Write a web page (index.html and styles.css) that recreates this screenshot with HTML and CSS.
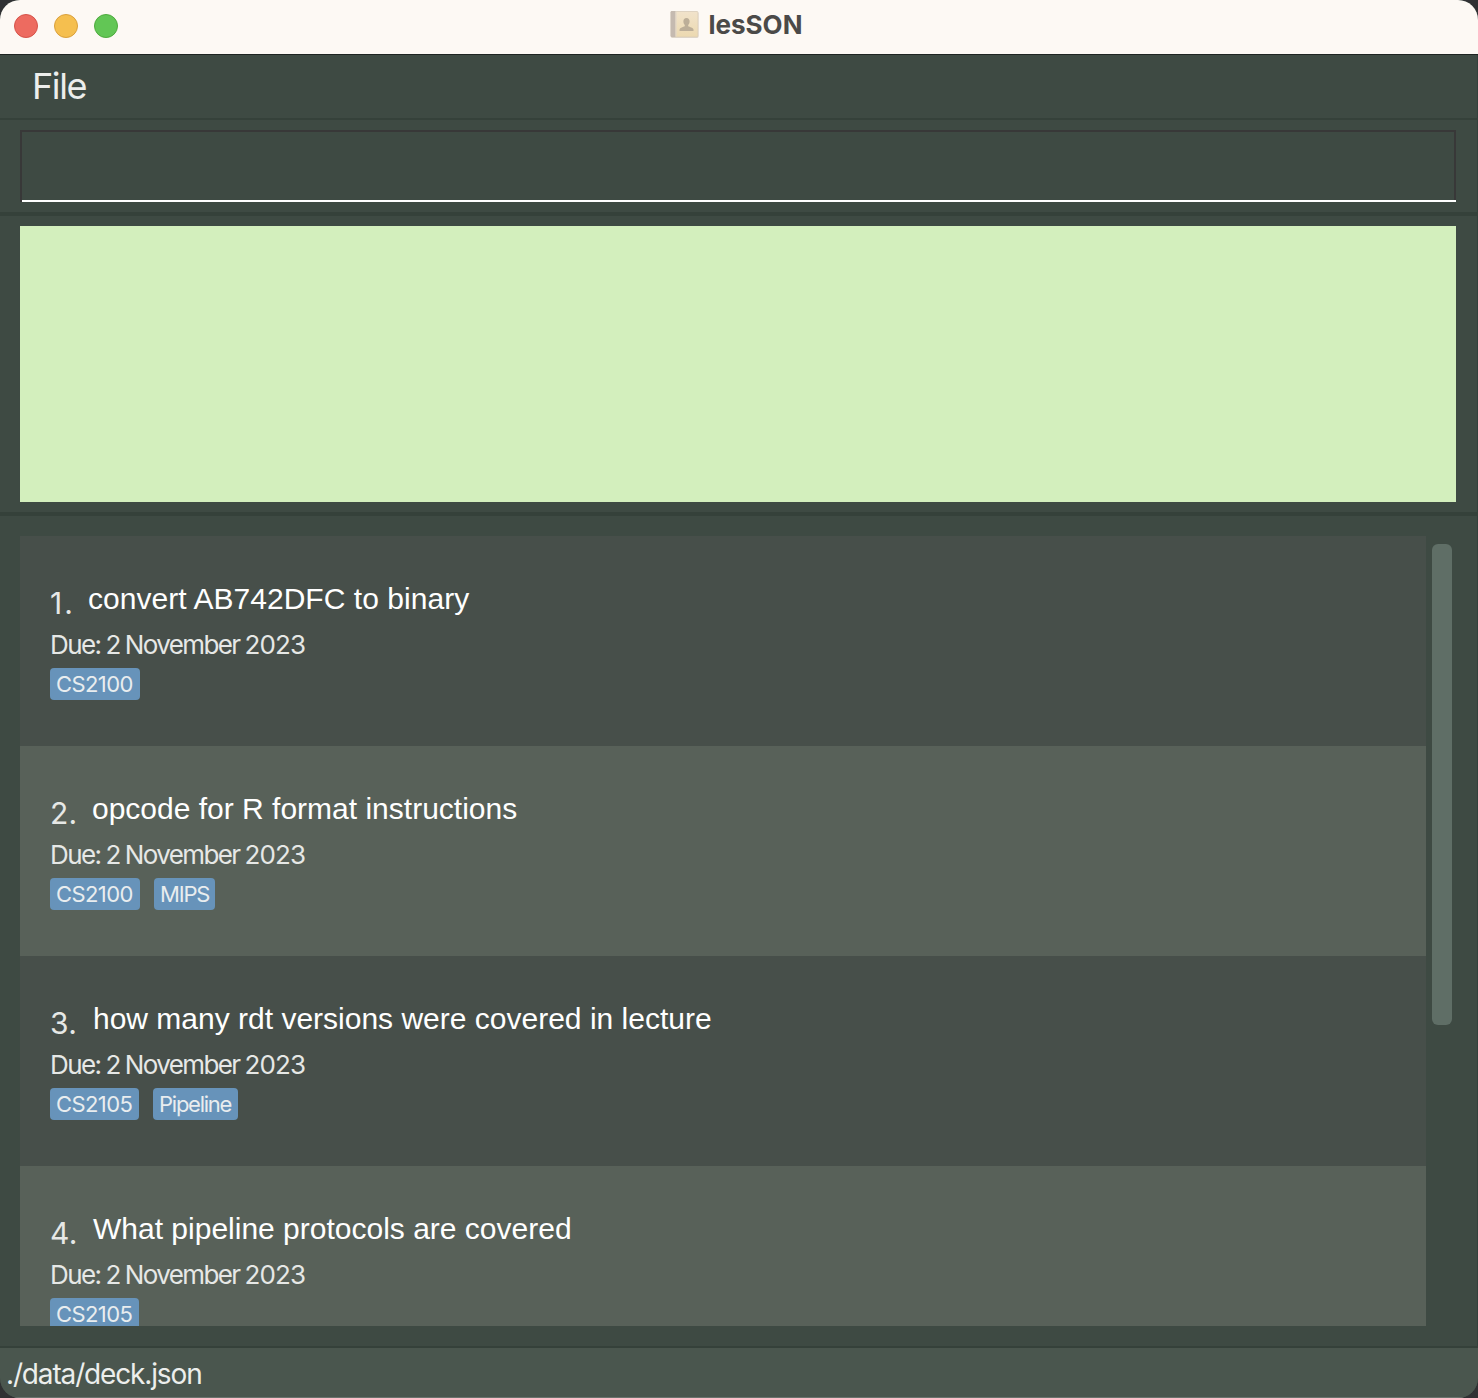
FILE: index.html
```html
<!DOCTYPE html>
<html lang="en">
<head>
<meta charset="utf-8">
<title>lesSON</title>
<link rel="stylesheet" href="styles.css">
</head>
<body>
<div class="window">
  <header class="titlebar">
    <div class="lights"><span class="light red"></span><span class="light yellow"></span><span class="light green"></span></div>
    <div class="title">
      <svg class="book" width="30" height="30" viewBox="0 0 30 30">
        <defs><linearGradient id="cover" x1="0" y1="0" x2="0" y2="1"><stop offset="0" stop-color="#f1e3cb"/><stop offset="1" stop-color="#ecd9b0"/></linearGradient></defs>
        <rect x="1" y="2" width="27.5" height="26" rx="1.5" fill="#e3dcd2"/>
        <rect x="1" y="1.500" width="27" height="25.5" rx="1" fill="url(#cover)" stroke="#d8ccb9" stroke-width=".8"/>
        <path d="M.6 2.200Q.6 1.100 1.800 1.100H5.500V27H1.800Q.6 27 .6 25.800Z" fill="#c5bab0"/>
        <rect x="5.500" y="1.500" width="1" height="25" fill="#e0d6c9"/>
        <path d="M16.500 8c2 0 3.100 1.300 3.100 3.300 0 1.700-.6 2.900-1.400 3.700v1.300c1.600.9 4.800 1.300 5.300 3.100v1.600H9.500v-1.600c.5-1.800 3.700-2.200 5.300-3.100V15c-.8-.8-1.400-2-1.400-3.700C13.400 9.300 14.500 8 16.500 8Z" fill="#bcae98"/>
      </svg>
      <span class="title-text">lesSON</span>
    </div>
  </header>
  <nav class="menubar"><span class="menu">File</span></nav>
  <section class="command"><div class="command-box"></div></section>
  <section class="result"><div class="result-box"></div></section>
  <main class="deck">
    <div class="cards">
      <article class="card odd">
        <div class="heading"><span class="num n1">1.</span><span class="question q1">convert AB742DFC to binary</span></div>
        <div class="due">Due: 2 November <span class="year">2023</span></div>
        <div class="tags"><span class="tag">CS2100</span></div>
      </article>
      <article class="card even">
        <div class="heading"><span class="num n2">2.</span><span class="question">opcode for R format instructions</span></div>
        <div class="due">Due: 2 November <span class="year">2023</span></div>
        <div class="tags"><span class="tag">CS2100</span><span class="tag mips">MIPS</span></div>
      </article>
      <article class="card odd">
        <div class="heading"><span class="num">3.</span><span class="question">how many rdt versions were covered in lecture</span></div>
        <div class="due">Due: 2 November <span class="year">2023</span></div>
        <div class="tags"><span class="tag narrow">CS2105</span><span class="tag pipeline">Pipeline</span></div>
      </article>
      <article class="card even">
        <div class="heading"><span class="num">4.</span><span class="question">What pipeline protocols are covered</span></div>
        <div class="due">Due: 2 November <span class="year">2023</span></div>
        <div class="tags"><span class="tag narrow">CS2105</span></div>
      </article>
    </div>
    <div class="scroll"><div class="thumb"></div></div>
  </main>
  <footer class="status"><span class="path">./data/deck.json</span></footer>
</div>
</body>
</html>
```
FILE: styles.css
```css
* { box-sizing: border-box; }
body { margin: 0; background: #303133; font-family: Inter, "Liberation Sans", sans-serif; }
.window { width: 1478px; height: 1398px; display: flex; flex-direction: column; overflow: hidden; border-radius: 20px; background: #3e4a43; box-shadow: inset -1px 0 #33413c; white-space: nowrap; }
.titlebar { height: 55px; flex: none; display: grid; grid-template-columns: 1fr auto 1fr; background: #fdf9f4; border-bottom: 1px solid #1e2422; }
.lights { display: flex; gap: 16px; padding: 14px 0 0 14px; }
.light { width: 24px; height: 24px; border-radius: 50%; border: 1px solid; }
.red { background: #ed6b60; border-color: #d55349; }
.yellow { background: #f5bf4f; border-color: #d9a03c; }
.green { background: #62c655; border-color: #4eaa3d; }
.title { display: flex; gap: 9px; padding-top: 10px; margin-left: -6px; color: #4b4a48; }
.title-text { font-size: 26px; font-weight: 700; line-height: 30px; }
.menubar { height: 65px; flex: none; padding: 7px 0 0 32px; border-bottom: 2px solid #35413a; }
.menu { display: inline-block; font-size: 36px; line-height: 48px; font-weight: 400; letter-spacing: -1.4px; color: #eceeec; }
.command { height: 96px; flex: none; padding: 10px 22px 10px 20px; border-bottom: 4px solid #35413a; }
.command-box { height: 72px; background: linear-gradient(#383838, #383838) 0 0 / 2px 100% no-repeat, linear-gradient(#fff, #fff) 0 100% / 100% 2px no-repeat, linear-gradient(#383838, #383838) 0 0 / 100% 2px no-repeat, linear-gradient(#383838, #383838) 100% 0 / 2px 100% no-repeat; }
.result { height: 300px; flex: none; padding: 10px 22px 10px 20px; border-bottom: 4px solid #35413a; }
.result-box { height: 276px; background: #d3efbd; }
.deck { height: 832px; flex: none; display: flex; padding: 20px 0 20px 20px; border-bottom: 2px solid #35413a; }
.cards { width: 1406px; height: 790px; overflow: hidden; }
.card { height: 210px; padding: 45px 30px 0; }
.odd { background: #474f4a; }
.even { background: #586159; }
.heading { height: 46px; display: flex; }
.num { width: 43px; font-size: 30px; line-height: 44px; font-weight: 400; letter-spacing: .3px; color: #e6e8e6; }
.n1 { width: 38px; letter-spacing: 2px; }
.n2 { width: 42px; }
.question { font: 30px/36px "Liberation Sans", Arial, sans-serif; color: #fff; }
.q1 { letter-spacing: .04px; }
.due { height: 36px; line-height: 36px; font-size: 26px; font-weight: 400; letter-spacing: -1.6px; word-spacing: -.7px; color: #e6e8e6; }
.year { letter-spacing: -.9px; }
.tags { display: flex; gap: 14px; margin-top: 5px; }
.tag { width: 90px; height: 32px; border-radius: 4px; background: #6793ba; color: #e9edef; font-size: 22px; line-height: 33px; font-weight: 400; letter-spacing: -.6px; padding-left: 6px; }
.narrow { width: 89px; }
.mips { width: 61px; letter-spacing: -1.2px; }
.pipeline { width: 85px; letter-spacing: -1.25px; }
.scroll { padding: 8px 0 0 6px; }
.thumb { width: 20px; height: 481px; border-radius: 6px; background: #5f6e66; }
.status { height: 50px; flex: none; background: #4a564e; border-bottom: 1px solid #6a736d; padding: 6px 0 0 6px; }
.path { display: inline-block; font-size: 28px; line-height: 40px; font-weight: 400; letter-spacing: -1.15px; color: #eceeec; }
```
